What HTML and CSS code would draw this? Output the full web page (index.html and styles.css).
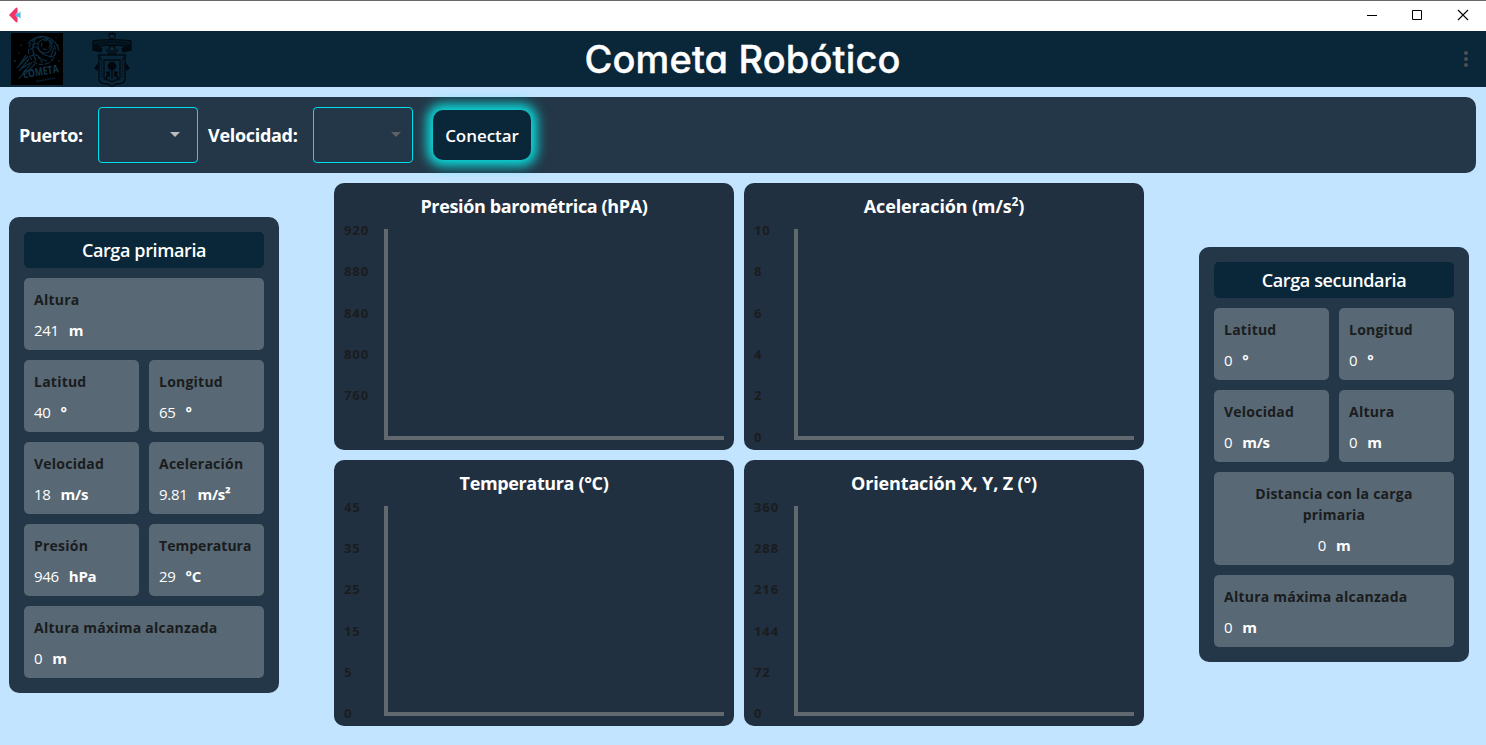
FILE: index.html
```html
<!DOCTYPE html>
<html lang="es">
<head>
<meta charset="utf-8">
<title>Cometa Robótico</title>
<link rel="stylesheet" href="styles.css">
</head>
<body>
<div class="titlebar">
  <svg class="app-icon" width="13" height="16" viewBox="0 0 13 16"><path d="M0 8 6.500 1.200Q8 0 8.500 1L8.500 5 6.500 8 8.500 11 8.500 15Q8 16 6.500 14.800Z" fill="#f23568"/><path d="M6.500 8 8.500 5.300 9 6.500 11.500 4.500V11.500L9 9.500 8.500 10.700Z" fill="#55b9e6"/></svg>
  <div class="window-controls">
    <svg width="12" height="12" viewBox="0 0 12 12"><path d="M1 6.500H11" stroke="#000"/></svg>
    <svg width="12" height="12" viewBox="0 0 12 12"><path d="M1.500 1.500H10.500V10.500H1.500Z" stroke="#000" fill="none"/></svg>
    <svg width="12" height="12" viewBox="0 0 12 12"><path d="M1 1 11 11M11 1 1 11" stroke="#000" stroke-width="1.100"/></svg>
  </div>
</div>
<header class="header">
  <div class="logos">
    <svg width="52" height="52" viewBox="0 0 52 52">
      <rect width="52" height="52" fill="#000"/>
      <g fill="none" stroke="#0c2c42" stroke-width="1.200">
        <path d="M17 11A17 17 0 0 1 48 18"/>
        <circle cx="31" cy="18" r="13.500" stroke-dasharray="5 1.500"/>
        <circle cx="34" cy="13" r="7"/>
        <circle cx="35" cy="12" r="4.500" stroke-dasharray="4 2"/>
        <path d="M19 17Q24 11 27 16T37 23T44 20M20 23Q28 19 31 30M24 8Q20 14 23 21M27 25 36 28M39 25 43 15M21 12 27 10M25 28 22 20"/>
        <path d="M18 26 8 38M21 29 8 46M17 23 6 35M24 31 13 42M19 30 10 36M15 22 9 31"/>
      </g>
      <g fill="#103047"><circle cx="10" cy="12" r=".8"/><circle cx="4" cy="28" r=".9"/><circle cx="13" cy="7" r=".6"/><circle cx="47" cy="12" r=".7"/><circle cx="8" cy="20" r=".7"/><circle cx="48" cy="28" r=".8"/><circle cx="45" cy="5" r=".5"/><circle cx="5" cy="17" r=".5"/></g>
      <text class="logo-word" x="12.500" y="45.500" textLength="36" lengthAdjust="spacingAndGlyphs" transform="rotate(-10 12.500 45.500)">COMETA</text>
      <path d="M25 48.500 44 45" stroke="#0a2639" stroke-width="1.500" stroke-dasharray="1.500 .8"/>
    </svg>
    <svg width="40" height="55" viewBox="0 0 40 55">
      <g fill="none" stroke="#020b12" stroke-width="1.300">
        <circle cx="20" cy="4" r="3" stroke-dasharray="2 .7"/><path d="M16 2H24M18 7H22"/>
        <path d="M1 9Q20 6 39 9L38 15Q20 11 2 15Z" fill="#061a28"/>
        <path d="M4 12Q20 8 36 12" stroke-width="2" stroke-dasharray="1.500 1"/>
        <path d="M1 11 1 18 9 20 10 16M39 11 39 18 31 20 30 16" fill="#020b12"/>
        <circle cx="20" cy="17" r="3"/><path d="M14 17 17 22H23L26 17M16 22H24"/>
        <path d="M7 23H33V48Q32 52 24 52L20 54.500 16 52Q8 52 7 48Z"/>
        <path d="M12 28H28V46Q28 48 23 48L20 50 17 48Q12 48 12 46Z"/>
        <path d="M7 31 3 36 5 38 7 35M33 31 37 36 35 38 33 35M6 23 9 27M34 23 31 27" fill="#020b12"/>
        <path d="M9.500 27V46M30.500 27V46" stroke-dasharray="1.500 1.300"/>
      </g>
      <g fill="#01070c"><circle cx="20" cy="34" r="4.300"/><path d="M19.300 36H20.700V47H19.300ZM14 40 18 39V45L16 44 15 47 13 46 15 43ZM26 40 22 39V45L24 44 25 47 27 46 25 43Z"/></g>
    </svg>
  </div>
  <h1 class="app-title">Cometa Robótico</h1>
  <svg class="more" width="6" height="18" viewBox="0 0 6 18" fill="#4b4e52"><circle cx="3" cy="3" r="2.100"/><circle cx="3" cy="9" r="2.100"/><circle cx="3" cy="15" r="2.100"/></svg>
</header>

<section class="toolbar">
  <span class="field-name port-name">Puerto:</span>
  <div class="dropdown port"><i class="arrow"></i></div>
  <span class="field-name speed-name">Velocidad:</span>
  <div class="dropdown speed disabled"><i class="arrow"></i></div>
  <button class="connect">Conectar</button>
</section>

<main class="dashboard">
  <aside class="panel">
    <h2 class="panel-title primary">Carga primaria</h2>
    <div class="card wide"><b class="label">Altura</b><p class="reading">241<b>m</b></p></div>
    <div class="card"><b class="label">Latitud</b><p class="reading">40<b>°</b></p></div>
    <div class="card"><b class="label">Longitud</b><p class="reading">65<b>°</b></p></div>
    <div class="card"><b class="label">Velocidad</b><p class="reading">18<b>m/s</b></p></div>
    <div class="card"><b class="label">Aceleración</b><p class="reading">9.81<b>m/s²</b></p></div>
    <div class="card"><b class="label">Presión</b><p class="reading">946<b>hPa</b></p></div>
    <div class="card"><b class="label tight">Temperatura</b><p class="reading">29<b>°C</b></p></div>
    <div class="card wide"><b class="label">Altura máxima alcanzada</b><p class="reading">0<b>m</b></p></div>
  </aside>

  <div class="charts">
    <section class="chart"><h3 class="chart-title">Presión barométrica (hPA)</h3>
      <div class="plot-row"><div class="ticks"><span>920</span><span>880</span><span>840</span><span>800</span><span>760</span><span></span></div><div class="plot"></div></div></section>
    <section class="chart"><h3 class="chart-title loose">Aceleración (m/s<span class="sq">2</span>)</h3>
      <div class="plot-row"><div class="ticks"><span>10</span><span>8</span><span>6</span><span>4</span><span>2</span><span>0</span></div><div class="plot"></div></div></section>
    <section class="chart"><h3 class="chart-title">Temperatura (°C)</h3>
      <div class="plot-row"><div class="ticks"><span>45</span><span>35</span><span>25</span><span>15</span><span>5</span><span>0</span></div><div class="plot"></div></div></section>
    <section class="chart"><h3 class="chart-title loose">Orientación X, Y, Z (°)</h3>
      <div class="plot-row"><div class="ticks"><span>360</span><span>288</span><span>216</span><span>144</span><span>72</span><span>0</span></div><div class="plot"></div></div></section>
  </div>

  <aside class="panel">
    <h2 class="panel-title">Carga secundaria</h2>
    <div class="card"><b class="label">Latitud</b><p class="reading">0<b>°</b></p></div>
    <div class="card"><b class="label">Longitud</b><p class="reading">0<b>°</b></p></div>
    <div class="card"><b class="label">Velocidad</b><p class="reading">0<b>m/s</b></p></div>
    <div class="card"><b class="label">Altura</b><p class="reading">0<b>m</b></p></div>
    <div class="card wide centered"><b class="label">Distancia con la carga<br>primaria</b><p class="reading">0<b>m</b></p></div>
    <div class="card wide"><b class="label">Altura máxima alcanzada</b><p class="reading">0<b>m</b></p></div>
  </aside>
</main>
</body>
</html>
```

FILE: styles.css
```css
* { box-sizing: border-box; margin: 0; padding: 0; }
body {
  width: 1486px;
  height: 745px;
  overflow: hidden;
  background: #c2e4ff;
  color: #fff;
  font-family: "Open Sans", "Noto Sans", sans-serif;
}
svg { display: block; }
.titlebar {
  height: 31px;
  background: #fff;
  border-top: 1px solid #69676c;
  display: flex;
  align-items: center;
  justify-content: space-between;
  padding: 0 17px 2px 9px;
}
.window-controls { display: flex; gap: 34px; }
.window-controls svg:first-child { margin-right: -1px; }
.header {
  height: 56px;
  background: #0a2639;
  display: grid;
  grid-template-columns: 1fr auto 1fr;
  align-items: center;
  padding: 0 17px 0 11px;
}
.logos { display: flex; align-items: center; gap: 29px; }
.app-title {
  margin-left: 5px;
  font: 500 38px/56px Inter, sans-serif;
  font-feature-settings: "cv11";
  letter-spacing: .15px;
  -webkit-text-stroke: .4px #fff;
  white-space: nowrap;
}
.more { justify-self: end; }
.logo-word { font: bold 11px "Open Sans", sans-serif; fill: #12364e; }

.toolbar {
  height: 76px;
  margin: 10px 10px 0 9px;
  padding: 0 10px;
  border-radius: 10px;
  background: #233748;
  display: flex;
  align-items: center;
}
.field-name { font-size: 18px; font-weight: 700; letter-spacing: -.3px; white-space: nowrap; }
.port-name { width: 79px; }
.speed-name { width: 105px; }
.dropdown {
  width: 100px;
  height: 56px;
  border: 1px solid #00dfee;
  border-radius: 4px;
  display: flex;
  align-items: center;
  justify-content: flex-end;
  padding: 0 17.5px 2px 0;
}
.port { margin-right: 10px; }
.arrow { border: 5px solid transparent; border-top-color: #bdbdbd; border-bottom: 0; }
.disabled { padding-right: 11.5px; }
.disabled .arrow { border-top-color: #616161; }
.connect {
  width: 98px;
  height: 50px;
  margin-left: 20px;
  border: 0;
  border-radius: 10px;
  background: #0a2639;
  color: #fff;
  font: 600 17px "Open Sans", sans-serif;
  letter-spacing: -.05px;
  box-shadow: 0 0 12px 6px #0bdfdf;
}

.dashboard {
  height: 563.34px;
  display: flex;
  align-items: center;
  padding: 0 17px 0 9px;
  justify-content: space-between;
}
.panel {
  width: 270px;
  padding: 15px;
  border-radius: 10px;
  background: #233748;
  display: grid;
  grid-template-columns: 115px 115px;
  gap: 10px;
}
.panel-title {
  grid-column: 1 / -1;
  border-radius: 5px;
  background: #0a2639;
  font-size: 18px;
  font-weight: 600;
  line-height: 36px;
  letter-spacing: -.38px;
  text-align: center;
}
.card {
  min-height: 72px;
  padding: 11px 0 8px 10px;
  border-radius: 5px;
  background: #586874;
  white-space: nowrap;
}
.wide { grid-column: 1 / -1; }
.centered { padding: 11px 10px 8px; text-align: center; }
.label {
  display: block;
  color: #1a1c1e;
  font-size: 14px;
  font-weight: 700;
  line-height: 21px;
  letter-spacing: .23px;
}
.tight { letter-spacing: .03px; }
.reading { margin-top: 9px; padding-bottom: 1px; font-size: 15px; line-height: 22px; letter-spacing: -.3px; }
.reading b { margin-left: 10px; font-weight: 700; }

.charts { display: grid; grid-template-columns: 400px 400px; gap: 10px; }
.chart {
  height: 266.67px;
  padding: 10px;
  border-radius: 10px;
  background: #203040;
  display: flex;
  flex-direction: column;
}
.chart-title {
  height: 36px;
  font-size: 18px;
  font-weight: 700;
  line-height: 27px;
  letter-spacing: -.36px;
  text-align: center;
  white-space: nowrap;
}
.loose { letter-spacing: -.15px; }
.sq { font-size: 12px; line-height: 0; vertical-align: 7px; }
.plot-row { flex: 1; display: flex; }
.plot { flex: 1; border: solid #61696f; border-width: 0 0 4px 4px; }
.ticks {
  width: 40px;
  margin: -8px 0 -6px;
  display: flex;
  flex-direction: column;
  justify-content: space-between;
  color: #1a1c1e;
  font-size: 13px;
  font-weight: 700;
  line-height: 18px;
  letter-spacing: .9px;
}
.ticks span { height: 18px; }
```
